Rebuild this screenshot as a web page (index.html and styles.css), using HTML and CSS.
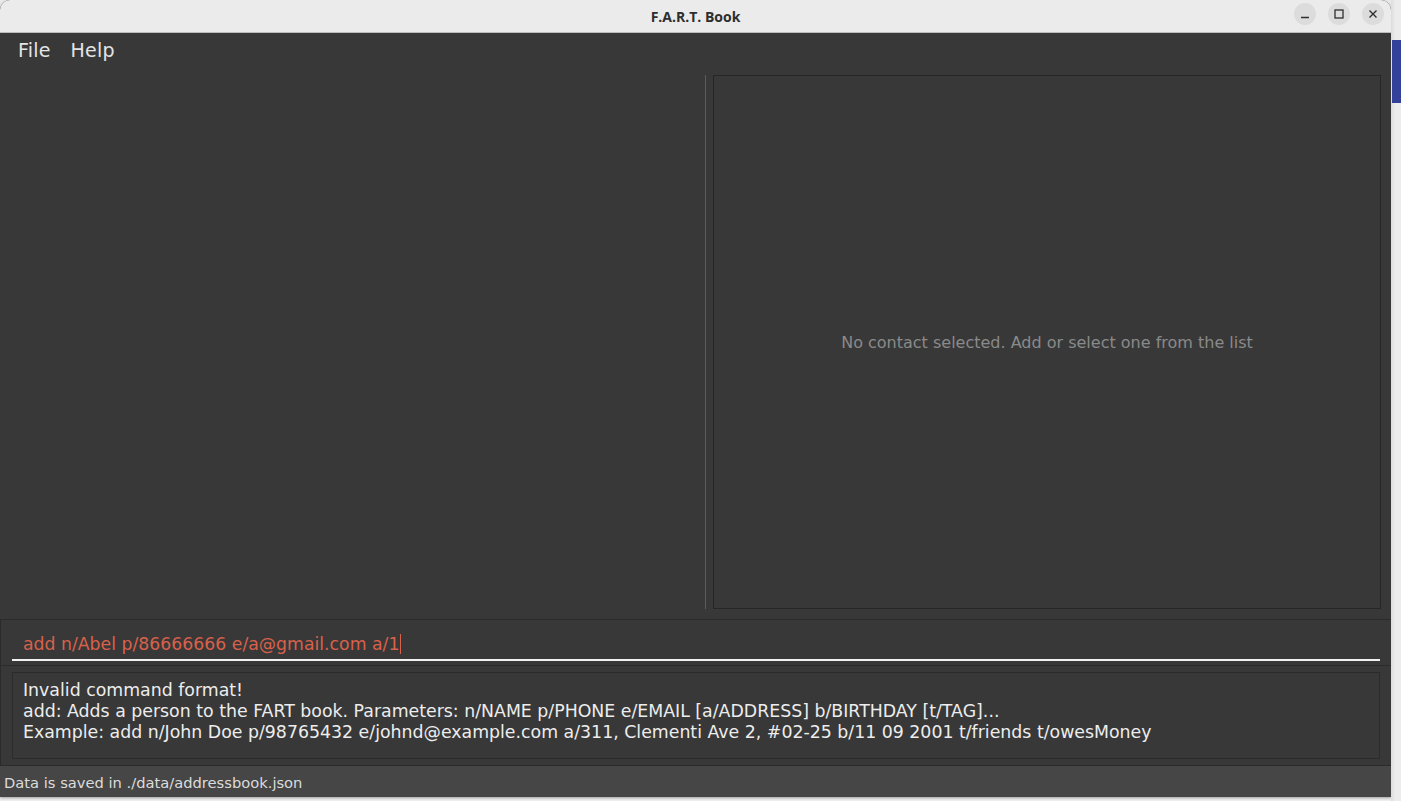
FILE: index.html
```html
<!DOCTYPE html>
<html>
<head>
<meta charset="utf-8">
<link rel="stylesheet" href="styles.css">
</head>
<body>
<div class="screen">
  <div class="window">
    <div class="titlebar">
      <div class="title">F.A.R.T. Book</div>
      <div class="controls">
        <span class="ctl"><svg width="22" height="22" viewBox="0 0 22 22"><path d="M7 14.5h8" stroke="#2e2e2e" stroke-width="1.3"/></svg></span>
        <span class="ctl"><svg width="22" height="22" viewBox="0 0 22 22"><rect x="7" y="7" width="8" height="8" fill="none" stroke="#2e2e2e" stroke-width="1.3"/></svg></span>
        <span class="ctl"><svg width="22" height="22" viewBox="0 0 22 22"><path d="M7.5 7.5l7 7M14.5 7.5l-7 7" stroke="#2e2e2e" stroke-width="1.4"/></svg></span>
      </div>
    </div>
    <div class="menubar">
      <span class="menu">File</span>
      <span class="menu">Help</span>
    </div>
    <div class="split">
      <div class="list-pane"></div>
      <div class="divider"></div>
      <div class="detail-pane">
        <div class="detail-box">No contact selected. Add or select one from the list</div>
      </div>
    </div>
    <div class="command-box">
      <div class="command-field"><span class="command-text">add n/Abel p/86666666 e/a@gmail.com a/1</span><span class="caret"></span></div>
    </div>
    <div class="result-outer">
      <div class="result-box">
        <div>Invalid command format!</div>
        <div>add: Adds a person to the FART book. Parameters: n/NAME p/PHONE e/EMAIL [a/ADDRESS] b/BIRTHDAY [t/TAG]...</div>
        <div>Example: add n/John Doe p/98765432 e/johnd@example.com a/311, Clementi Ave 2, #02-25 b/11 09 2001 t/friends t/owesMoney</div>
      </div>
    </div>
    <div class="statusbar">Data is saved in ./data/addressbook.json</div>
  </div>
  <div class="side">
    <div class="side-band"></div>
  </div>
</div>
</body>
</html>
```

FILE: styles.css
```css
html, body {
  margin: 0;
  padding: 0;
  background: #eeeeee;
  width: 1401px;
  height: 801px;
  overflow: hidden;
}

.screen {
  display: flex;
  width: 1401px;
  height: 801px;
  background: linear-gradient(#eaeaea, #f0f0f0);
}

.window {
  width: 1391px;
  height: 797px;
  display: flex;
  flex-direction: column;
  background: #383838;
  border-radius: 10px 10px 0 0;
  overflow: hidden;
  box-shadow: 0 1px 3px rgba(0,0,0,0.35);
  font-family: "DejaVu Sans", "Liberation Sans", sans-serif;
}

.titlebar {
  height: 32px;
  flex: none;
  background: #ebebeb;
  border-bottom: 1px solid #bcbcbc;
  position: relative;
  display: flex;
  align-items: center;
  justify-content: center;
}

.title {
  font-family: "Open Sans", "Noto Sans", sans-serif;
  font-weight: 700;
  font-size: 14px;
  color: #2e2e2e;
}

.controls {
  position: absolute;
  right: 7px;
  top: 3px;
  display: flex;
  gap: 12px;
}

.ctl {
  width: 22px;
  height: 22px;
  border-radius: 50%;
  background: #dcdcdc;
  display: block;
}

.ctl svg { display: block; }

.menubar {
  height: 37px;
  flex: none;
  display: flex;
  align-items: center;
  padding-left: 18px;
  padding-bottom: 4px;
  box-sizing: border-box;
  gap: 20px;
  background: #383838;
}

.menu {
  font-size: 19px;
  color: #e4e4e4;
  letter-spacing: 0.2px;
}

.split {
  height: 549px;
  flex: none;
  display: flex;
  padding: 5px 0 10px 0;
  box-sizing: border-box;
}

.list-pane {
  width: 705px;
  flex: none;
}

.divider {
  width: 1px;
  background: #5c5c5c;
  flex: none;
}

.detail-pane {
  flex: 1;
  padding: 0 10px 0 7px;
  display: flex;
}

.detail-box {
  flex: 1;
  border: 1px solid #262626;
  display: flex;
  align-items: center;
  justify-content: center;
  font-size: 16px;
  color: #8a8a8a;
  box-sizing: border-box;
}

.command-box {
  height: 47px;
  flex: none;
  border: 1px solid #2b2b2b;
  border-right: none;
  box-sizing: border-box;
  padding: 0 11px 0 11px;
}

.command-field {
  height: 41px;
  border-bottom: 2px solid #f2f2f2;
  box-sizing: border-box;
  display: flex;
  align-items: center;
  padding-left: 11px;
  padding-top: 8px;
}

.command-text {
  font-size: 17.3px;
  color: #d8614b;
}

.caret {
  width: 1px;
  height: 20px;
  background: #d8614b;
  margin-left: 1px;
}

.result-outer {
  height: 100px;
  flex: none;
  padding: 6px 11px 6px 11px;
  box-sizing: border-box;
  border-left: 1px solid #2b2b2b;
  border-bottom: 1px solid #2b2b2b;
}

.result-box {
  height: 100%;
  box-sizing: border-box;
  border: 1px solid #2b2b2b;
  padding: 7px 10px 0 10px;
  font-size: 17.35px;
  line-height: 21px;
  color: #ededed;
  white-space: nowrap;
}

.statusbar {
  flex: 1;
  background: #464646;
  color: #dcdcdc;
  font-size: 14.7px;
  padding-left: 4px;
  display: flex;
  align-items: center;
  padding-top: 1px;
}

.side {
  width: 10px;
  flex: none;
  background: linear-gradient(90deg, #dcdcdc, #ececec 40%);
  padding-top: 40px;
  box-sizing: border-box;
}

.side-band {
  height: 63px;
  margin-left: 1px;
  background: #34419b;
}
```
